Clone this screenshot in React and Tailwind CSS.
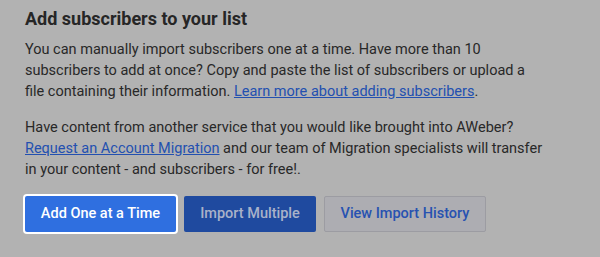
export default function App() {
  return (
    <div className="w-[600px] h-[257px] bg-[#b2b2b2] text-[#282828] overflow-hidden" style={{ fontFamily: 'Roboto, "Liberation Sans", sans-serif' }}>
      <div className="pl-[25px] pt-[7px] w-[547px]">
        <h2 className="text-[18px] leading-[24px] font-bold text-[#262626]">Add subscribers to your list</h2>
        <p className="mt-[8px] text-[14.5px] leading-[21px]">
          You can manually import subscribers one at a time. Have more than 10 subscribers to add at once? Copy and paste the list of subscribers or upload a file containing their information.{" "}
          <a className="text-[#2350b0] underline">Learn more about adding subscribers</a>.
        </p>
        <p className="mt-[15px] text-[14.5px] leading-[21px]">
          Have content from another service that you would like brought into AWeber?{" "}
          <a className="text-[#2350b0] underline">Request an Account Migration</a> and our team of Migration specialists will transfer in your content - and subscribers - for free!.
        </p>
        <div className="mt-[16px] flex gap-[8px]">
          <button className="h-[36px] w-[151px] rounded-[2px] bg-[#2f6fe0] text-white text-[14.5px] font-medium ring-2 ring-white">Add One at a Time</button>
          <button className="h-[36px] w-[132px] rounded-[2px] bg-[#1f4a9f] text-[#a9b2c9] text-[14.5px] font-medium">Import Multiple</button>
          <button className="h-[36px] w-[162px] rounded-[2px] bg-[#adadb2] border border-[#9c9ca2] text-[#2752b1] text-[14.5px] font-medium">View Import History</button>
        </div>
      </div>
    </div>
  );
}
